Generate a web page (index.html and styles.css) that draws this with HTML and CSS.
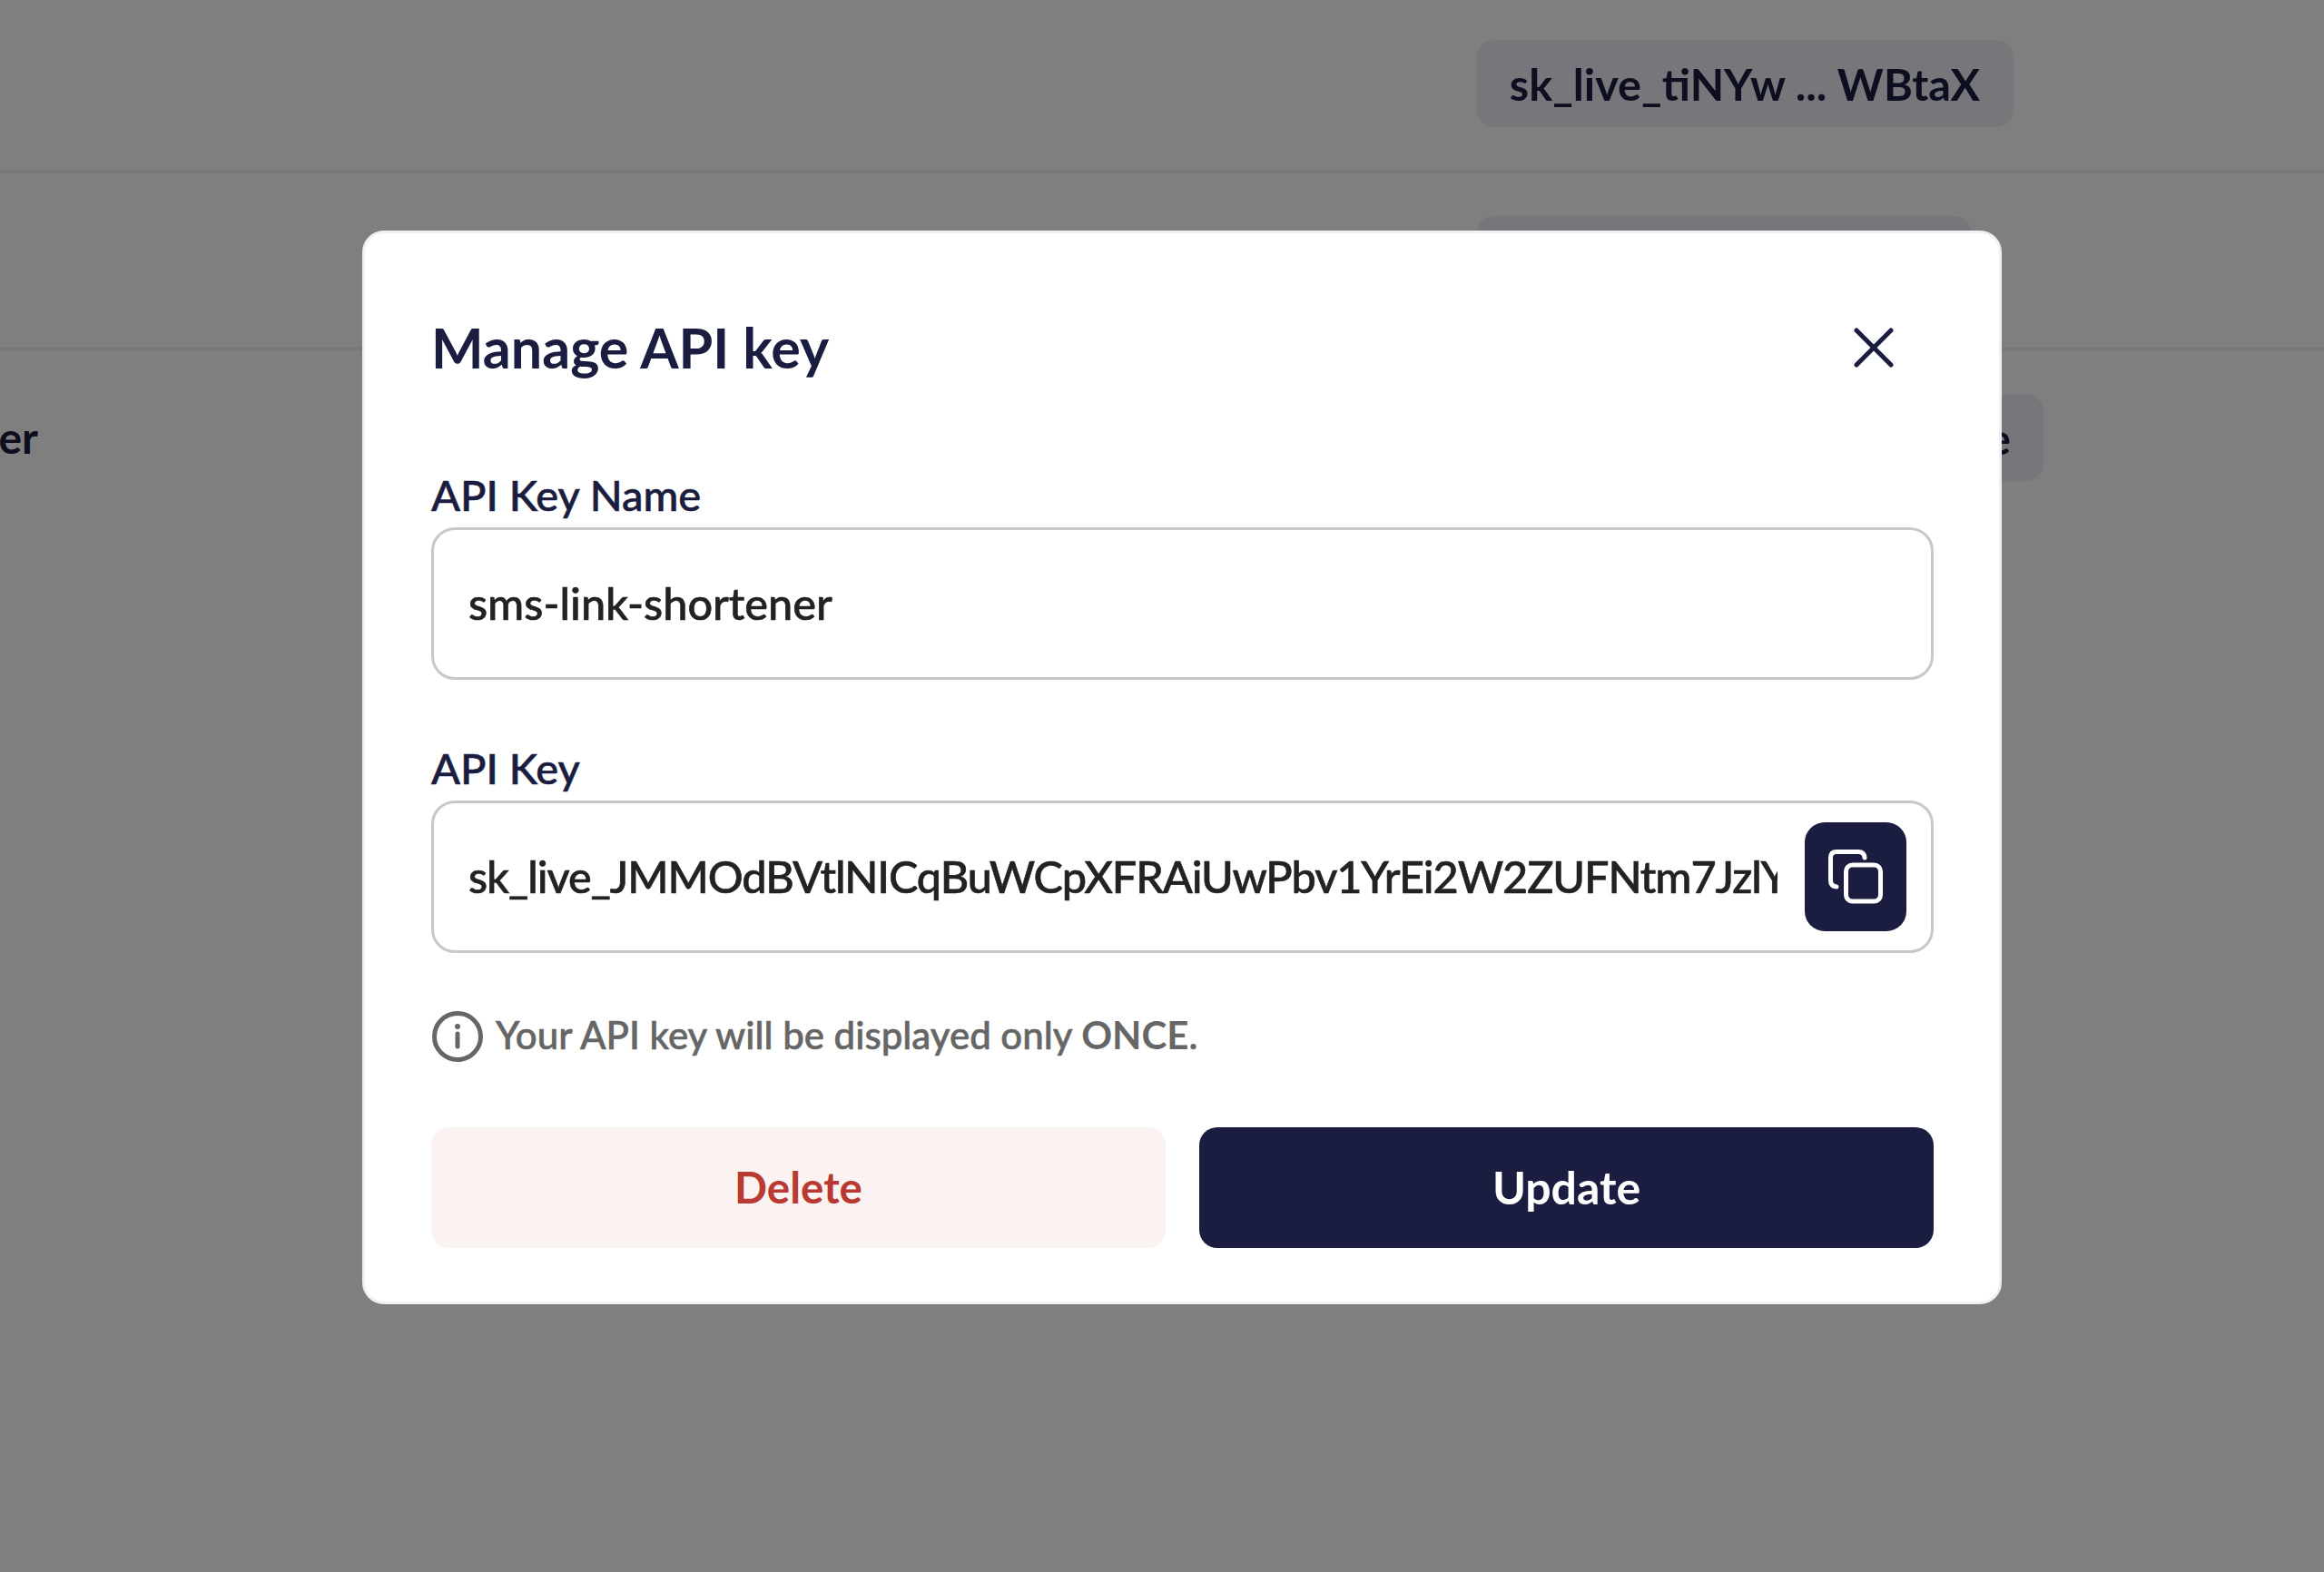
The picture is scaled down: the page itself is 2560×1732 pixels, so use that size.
FILE: index.html
```html
<!DOCTYPE html>
<html lang="en">
<head>
<meta charset="utf-8">
<title>Manage API key</title>
<link rel="stylesheet" href="styles.css">
</head>
<body>
<main class="table">
  <div class="row row-first">
    <div class="name"></div>
    <div class="pill">sk_live_tiNYw ... WBtaX</div>
  </div>
  <div class="row row-second">
    <div class="name"></div>
    <div class="pill pill-second">sk_live_aQpRt ... Hn2Lk</div>
  </div>
  <div class="row row-third">
    <div class="name">sms-link-shortener</div>
    <div class="pill pill-third">sk_live_JMMOd ... Ntm7e</div>
  </div>
</main>
<div class="overlay">
  <section class="modal">
    <header class="modal-head">
      <h2 class="title">Manage API key</h2>
      <svg class="close" viewBox="0 0 44 44" aria-label="Close"><path d="M3 3 41 41M41 3 3 41"/></svg>
    </header>
    <label class="label label-first">API Key Name</label>
    <div class="field"><span class="value">sms-link-shortener</span></div>
    <label class="label label-second">API Key</label>
    <div class="field field-key">
      <span class="value value-key">sk_live_JMMOdBVtlNICqBuWCpXFRAiUwPbv1YrEi2W2ZUFNtm7JzlYkP4sQx</span>
      <button class="copy" aria-label="Copy">
        <svg class="copy-icon" viewBox="0 0 60 60"><rect x="19.5" y="17" width="38" height="40" rx="7"/><path d="M40 9Q39.500 2.500 33 2.500H9Q2.500 2.500 2.500 9V34Q2.500 40.500 9 41"/></svg>
      </button>
    </div>
    <p class="note">
      <svg class="info" viewBox="0 0 56 56"><circle cx="28" cy="28" r="25.500"/><path d="M28 25V39"/><circle class="dot" cx="28" cy="17" r="3"/></svg>
      <span class="note-text">Your API key will be displayed only <b class="once">ONCE</b>.</span>
    </p>
    <div class="actions">
      <button class="btn btn-delete">Delete</button>
      <button class="btn btn-update">Update</button>
    </div>
  </section>
</div>
</body>
</html>
```
FILE: styles.css
```css
* { box-sizing: border-box; }
html, body { margin: 0; height: 1732px; overflow: hidden; background: #fff; }
body { font-family: Lato, "Liberation Sans", sans-serif; color: #1a1c40; position: relative; }

.table { display: flex; flex-direction: column; }
.row {
  display: grid;
  grid-template-columns: 42px auto;
  column-gap: 1584px;
  justify-content: start;
  align-items: center;
  border-bottom: 3px solid #eeeff0;
}
.row-first { height: 191px; padding-bottom: 4px; }
.row-second { height: 195px; padding-bottom: 2px; }
.row-third { border-bottom: 0; padding-top: 48px; }
.name {
  display: flex;
  justify-content: flex-end;
  overflow: hidden;
  white-space: nowrap;
  font-size: 48px;
  font-weight: 700;
  padding-bottom: 2px;
}
.pill {
  height: 96px;
  display: flex;
  align-items: center;
  justify-content: center;
  width: 592px;
  border-radius: 20px;
  background: #ecedf6;
  font-size: 48.600px;
  font-weight: 700;
  white-space: nowrap;
}
.pill-second { width: 546px; }
.pill-third { width: 625px; justify-content: flex-end; padding-right: 36px; }

.overlay {
  position: absolute;
  inset: 0;
  background: rgba(0, 0, 0, .5);
  padding: 254px 0 0 399px;
}
.modal {
  width: 1806px;
  height: 1183px;
  background: #fff;
  border: 3px solid #eef0f2;
  border-radius: 24px;
  padding: 91px 72px 60px 73px;
}
.modal-head { display: flex; justify-content: space-between; align-items: center; height: 70px; }
.title { margin: 0; font-size: 61px; font-weight: 700; line-height: 70px; }
.close { width: 44px; height: 44px; margin-right: 44px; fill: none; stroke: #1a1c40; stroke-width: 5; stroke-linecap: round; }

.label { display: block; height: 60px; margin-bottom: 5px; line-height: 58px; font-size: 47px; font-weight: 500; -webkit-text-stroke: .6px #1a1c40; }
.label-first { margin-top: 98px; }
.label-second { margin-top: 68px; }

.field {
  height: 168px;
  display: flex;
  align-items: center;
  gap: 30px;
  padding: 0 27px 0 38px;
  border: 3px solid #c8c8c8;
  border-radius: 26px;
  background: #fff;
}
.value { font-size: 48.600px; font-weight: 500; color: #222; white-space: nowrap; padding-bottom: 2px; -webkit-text-stroke: .6px #222; }
.value-key { flex: 1; min-width: 0; overflow: hidden; letter-spacing: -1.100px; }
.copy {
  flex: none;
  width: 112px;
  height: 120px;
  display: flex;
  align-items: center;
  justify-content: center;
  border: 0;
  padding: 0;
  border-radius: 22px;
  background: #1a1c40;
}
.copy-icon { width: 60px; height: 60px; fill: none; stroke: #fff; stroke-width: 5; stroke-linecap: round; }

.note { display: flex; align-items: center; gap: 14px; height: 56px; margin: 64px 0 0 1px; font-size: 42px; font-weight: 500; color: #666; }
.note-text { padding-bottom: 4px; -webkit-text-stroke: .6px #666; }
.info { width: 56px; height: 56px; fill: none; stroke: #666; stroke-width: 5; stroke-linecap: round; }
.info .dot { fill: #666; stroke: none; }
.once { font-weight: 700; -webkit-text-stroke: 0; }

.actions { display: flex; gap: 37px; margin-top: 72px; }
.btn {
  flex: 1;
  height: 133px;
  border: 0;
  border-radius: 20px;
  font-family: inherit;
  font-size: 50px;
  font-weight: 700;
  padding: 0 0 2px;
}
.btn-delete { background: #fbf3f1; color: #b93a32; font-size: 47.500px; }
.btn-update { background: #1a1c40; color: #fff; }
```
